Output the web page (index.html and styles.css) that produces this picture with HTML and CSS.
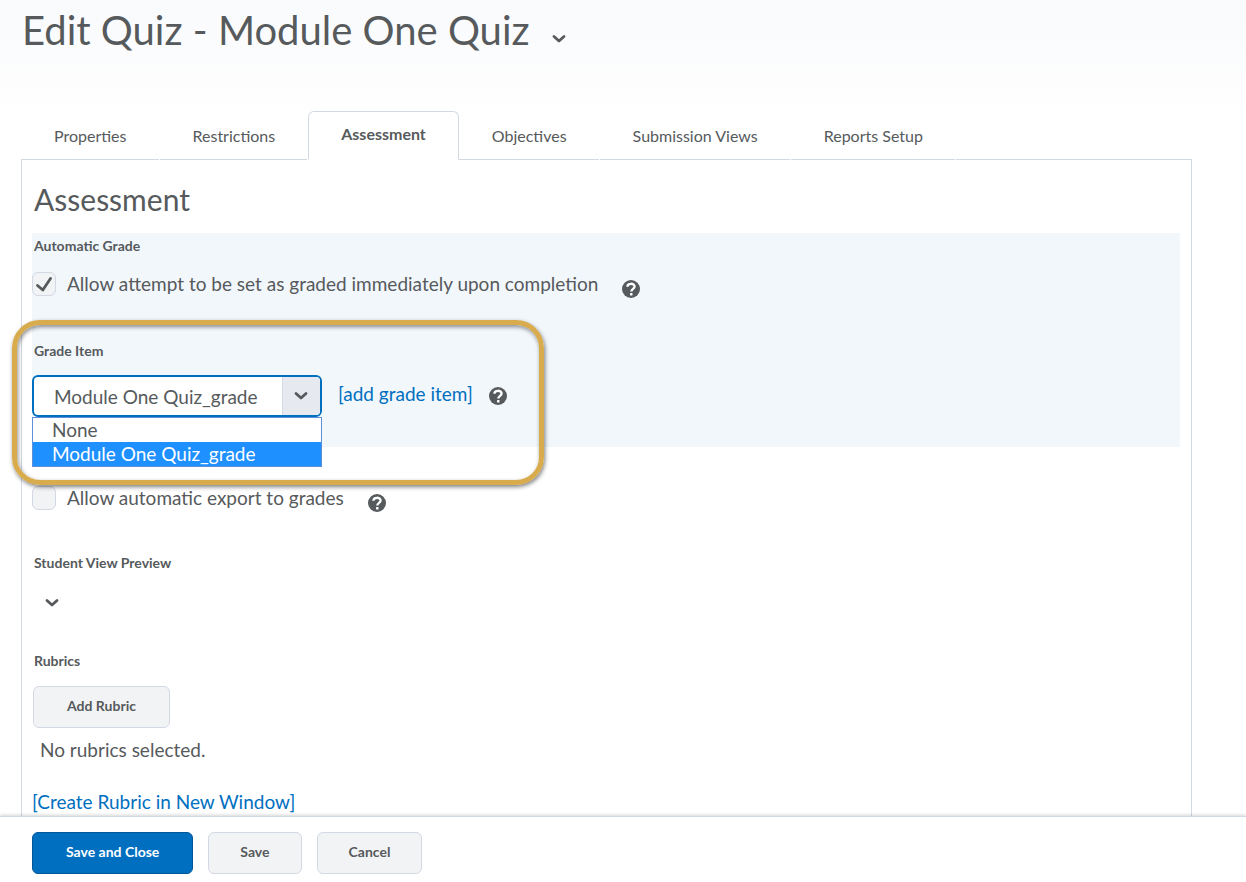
FILE: index.html
```
<!DOCTYPE html>
<html lang="en">
<head>
<meta charset="utf-8">
<meta name="viewport" content="width=device-width, initial-scale=1.0">
<title>Edit Quiz - Module One Quiz</title>
<link rel="stylesheet" href="styles.css">
</head>
<body>
<svg class="defs" aria-hidden="true">
    <symbol id="chevron" viewBox="0 0 14 10">
        <path d="M2 2.5 L7 7 L12 2.5" fill="none" stroke="currentColor" stroke-width="2.8" stroke-linecap="round" stroke-linejoin="round"/>
    </symbol>
    <symbol id="help" viewBox="0 0 18 18">
        <circle cx="9" cy="9" r="9" fill="#565a5c"/>
        <path d="M5.4 6.8 C5.4 2.8 12.6 2.8 12.6 6.6 C12.6 9 9.3 8.8 9.3 11.6" fill="none" stroke="#fff" stroke-width="2.3"/>
        <rect x="8" y="13" width="2.5" height="2.5" rx="0.6" fill="#fff"/>
    </symbol>
</svg>

<main class="page">
    <header class="title-bar">
        <h1>Edit Quiz - Module One Quiz</h1>
        <button class="icon-button" type="button" aria-label="Quiz actions"><svg class="chevron"><use href="#chevron"/></svg></button>
    </header>

    <nav class="tabs">
        <a class="tab" href="#properties">Properties</a>
        <a class="tab" href="#restrictions">Restrictions</a>
        <a class="tab active" href="#assessment">Assessment</a>
        <a class="tab" href="#objectives">Objectives</a>
        <a class="tab" href="#views">Submission Views</a>
        <a class="tab" href="#reports">Reports Setup</a>
        <span class="tab-line"></span>
    </nav>

    <div class="panel" id="assessment">
        <h2>Assessment</h2>

        <section class="highlight">
            <h3>Automatic Grade</h3>
            <div class="check-row">
                <input type="checkbox" id="autoGrade" checked>
                <label for="autoGrade">Allow attempt to be set as graded immediately upon completion</label>
                <button class="help" type="button" aria-label="Help: automatic grade"><svg><use href="#help"/></svg></button>
            </div>

            <div class="grade-item">
                <label class="field-label" for="gradeItem">Grade Item</label>
                <div class="select-row">
                    <div class="select-box">
                        <select id="gradeItem">
                            <option>None</option>
                            <option selected>Module One Quiz_grade</option>
                        </select>
                        <span class="select-arrow"><svg class="chevron"><use href="#chevron"/></svg></span>
                        <ul class="select-list">
                            <li>None</li>
                            <li class="selected">Module One Quiz_grade</li>
                        </ul>
                    </div>
                    <a href="#add">[add grade item]</a>
                    <button class="help" type="button" aria-label="Help: grade item"><svg><use href="#help"/></svg></button>
                </div>
                <div class="callout"></div>
            </div>
        </section>

        <div class="check-row export">
            <input type="checkbox" id="autoExport">
            <label for="autoExport">Allow automatic export to grades</label>
            <button class="help" type="button" aria-label="Help: automatic export"><svg><use href="#help"/></svg></button>
        </div>

        <section class="preview">
            <h3>Student View Preview</h3>
            <button class="icon-button" type="button" aria-label="Expand student view preview"><svg class="chevron"><use href="#chevron"/></svg></button>
        </section>

        <section class="rubrics">
            <h3>Rubrics</h3>
            <button class="button" type="button">Add Rubric</button>
            <p>No rubrics selected.</p>
            <a href="#rubric">[Create Rubric in New Window]</a>
        </section>
    </div>
</main>

<footer class="actions">
    <button class="button primary" type="submit">Save and Close</button>
    <button class="button" type="button">Save</button>
    <button class="button" type="button">Cancel</button>
</footer>
</body>
</html>
```
FILE: styles.css
```
* {
    box-sizing: border-box;
}

body {
    display: flex;
    flex-direction: column;
    height: 100vh;
    margin: 0;
    color: #565a5c;
    background: linear-gradient(#f9fafc, #fff 120px) no-repeat #fff;
    font-family: Lato, sans-serif;
    font-size: 19px;
    line-height: 24px;
}

h1, h2, h3, p, ul {
    margin: 0;
    padding: 0;
}

a {
    color: #006fbf;
    text-decoration: none;
}

button {
    font-family: inherit;
    color: inherit;
    cursor: pointer;
}

.defs {
    display: none;
}

.page {
    flex: 1;
    min-height: 0;
    overflow: hidden;
    padding: 0 54px 0 21px;
}

.title-bar {
    display: flex;
    align-items: center;
    gap: 9px;
    height: 111px;
    padding: 5px 0 56px 1px;
}

h1 {
    font-size: 40px;
    line-height: 50px;
    font-weight: 400;
}

.title-bar .icon-button {
    margin-top: 18px;
}

.icon-button {
    display: flex;
    align-items: center;
    justify-content: center;
    width: 40px;
    height: 24px;
    padding: 0;
    border: none;
    background: none;
}

.chevron {
    width: 14px;
    height: 10px;
}

.tabs {
    display: flex;
}

.tab {
    height: 49px;
    margin-right: 1px;
    padding: 13px 32px 0 33px;
    border-bottom: 1px solid #d3d9e3;
    color: #565a5c;
    background: #fff;
    font-size: 16px;
}

.tab.active {
    margin: 0;
    padding: 10px 32px 0;
    border: 1px solid #d3d9e3;
    border-bottom-color: #fff;
    border-radius: 6px 6px 0 0;
    font-weight: 700;
}

.tab-line {
    flex: 1;
    border-bottom: 1px solid #d3d9e3;
}

.panel {
    min-height: 100%;
    padding: 19px 11px 0 10px;
    border: 1px solid #d3d9e3;
    border-top: none;
    background: #fff;
}

h2 {
    padding: 0 2px 14px;
    font-size: 30px;
    line-height: 40px;
    font-weight: 400;
}

h3, .field-label {
    display: block;
    padding-left: 2px;
    font-size: 14px;
    line-height: 26px;
    font-weight: 700;
}

.highlight {
    padding-bottom: 30px;
    background: #f2f7fc;
}

.check-row {
    display: flex;
    align-items: center;
    height: 24px;
    margin-top: 13px;
}

.check-row input {
    appearance: none;
    flex: none;
    width: 24px;
    height: 24px;
    margin: 0 11px 0 0;
    border: 1px solid #d3d9e3;
    border-radius: 6px;
    background: #f2f3f5;
}

.check-row input:checked {
    background: #f2f3f5 url("data:image/svg+xml,%3Csvg xmlns='http://www.w3.org/2000/svg' viewBox='0 0 22 22'%3E%3Cpath d='M4.5 12.5 L9.8 17 L17.5 5.5' fill='none' stroke='%23565a5c' stroke-width='2.8' stroke-linecap='round' stroke-linejoin='round'/%3E%3C/svg%3E") center / 22px no-repeat;
}

.help {
    flex: none;
    width: 18px;
    height: 18px;
    padding: 0;
    border: none;
    background: none;
}

.help svg {
    display: block;
    width: 18px;
    height: 18px;
}

.check-row .help {
    margin: 10px 0 0 24px;
}

.grade-item {
    position: relative;
    margin-top: 42px;
}

.select-row {
    display: flex;
    align-items: center;
    gap: 16px;
    margin-top: 11px;
}

.select-row a {
    padding-bottom: 4px;
}

.select-box {
    position: relative;
    width: 290px;
}

.select-box select {
    appearance: none;
    display: block;
    width: 100%;
    height: 42px;
    padding: 0 40px 0 20px;
    border: 2px solid #006fbf;
    border-radius: 6px;
    outline: none;
    color: #565a5c;
    background: #fff;
    font-family: inherit;
    font-size: 19px;
}

.select-arrow {
    position: absolute;
    top: 2px;
    right: 2px;
    display: flex;
    align-items: center;
    justify-content: center;
    width: 38px;
    height: 38px;
    padding-right: 2px;
    border-left: 1px solid #d3d9e3;
    border-radius: 0 4px 4px 0;
    background: #e6eaf0;
    pointer-events: none;
}

.select-list {
    position: absolute;
    top: 100%;
    left: 0;
    width: 100%;
    border: 1px solid #5f8fd8;
    background: #fff;
    list-style: none;
}

.select-list li {
    padding-left: 19px;
}

.select-list .selected {
    color: #fff;
    background: #1e90ff;
}

/* marker round the grade item field */
.callout {
    position: absolute;
    top: -18px;
    left: -20px;
    width: 532px;
    height: 165px;
    border: 5px solid #d8ab4c;
    border-radius: 28px;
    box-shadow: 1px 2px 4px rgba(0, 0, 0, 0.5), inset 1px 2px 4px rgba(0, 0, 0, 0.45);
    pointer-events: none;
}

.export {
    margin-top: 39px;
}

.preview {
    margin-top: 40px;
}

.preview .icon-button {
    margin-top: 15px;
}

.rubrics {
    margin-top: 33px;
}

.rubrics .button {
    margin: 12px 0 10px 1px;
}

.rubrics p {
    margin-bottom: 28px;
    padding-left: 8px;
}

.button {
    display: block;
    height: 42px;
    padding: 0 31px 4px;
    border: 1px solid #d3d9e3;
    border-radius: 6px;
    background: #f2f3f5;
    font-size: 14px;
    font-weight: 700;
}

.button.primary, .rubrics .button {
    padding: 0 33px 4px;
}

.button.primary {
    border-color: #00569a;
    color: #fff;
    background: #006fbf;
}

.actions {
    position: relative;
    display: flex;
    gap: 15px;
    padding: 15px 32px 8px;
    border-top: 1px solid #d3d9e3;
    background: #fff;
    box-shadow: 0 -1px 3px rgba(86, 90, 92, 0.25);
}
```
